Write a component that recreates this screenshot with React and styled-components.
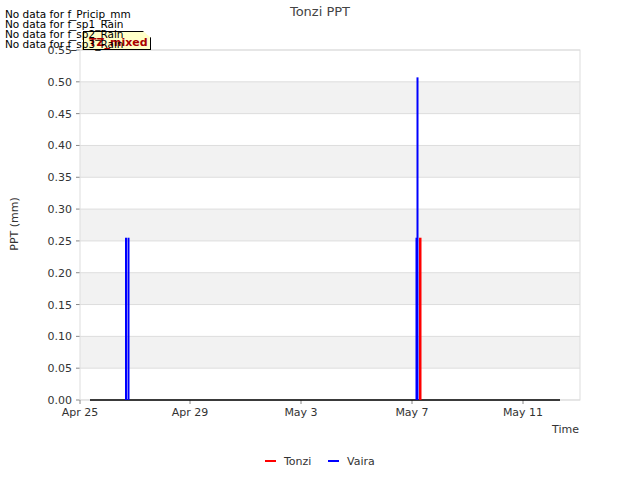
import React from 'react';
import styled, { createGlobalStyle } from 'styled-components';

const Global = createGlobalStyle`
  body { margin: 0; background: #fff; font-family: "DejaVu Sans", sans-serif; }
`;

const Page = styled.div`
  position: relative;
  width: 640px;
  height: 480px;
  overflow: hidden;
`;

const Notes = styled.div`
  position: absolute;
  left: 5px;
  top: 9px;
  font-size: 10.5px;
  line-height: 10px;
  color: #000;
`;

const Badge = styled.div`
  position: absolute;
  left: 83px;
  top: 31px;
  width: 68px;
  height: 19px;
  background: #ffffc8;
  border: 1px solid #000;
  clip-path: polygon(0 0, 88% 0, 100% 35%, 100% 100%, 0 100%);
  color: #aa0000;
  font-weight: bold;
  font-size: 11px;
  line-height: 21px;
  padding-left: 5px;
  box-sizing: border-box;
  white-space: nowrap;
`;

const Y0 = 400;
const K = 350 / 0.55;
const y = (v) => Y0 - v * K;
const ticks = Array.from({ length: 12 }, (_, i) => +(i * 0.05).toFixed(2));
const xs = [
  [80, 'Apr 25'],
  [190, 'Apr 29'],
  [301, 'May 3'],
  [412, 'May 7'],
  [523, 'May 11'],
];

function Chart() {
  return (
    <svg width="640" height="480" fontFamily="DejaVu Sans, sans-serif">
      <text x="320" y="16" textAnchor="middle" fontSize="13" fill="#444">Tonzi PPT</text>
      {ticks.slice(0, 11).map((v, i) =>
        i % 2 === 1 ? (
          <rect key={v} x="80" y={y(v + 0.05)} width="500" height={K * 0.05} fill="#f2f2f2" />
        ) : null
      )}
      {ticks.map((v) => (
        <g key={v}>
          <line x1="80" x2="580" y1={y(v)} y2={y(v)} stroke="#dddddd" />
          <line x1="76" x2="80" y1={y(v)} y2={y(v)} stroke="#888" />
          <text x="72" y={y(v) + 4} textAnchor="end" fontSize="11" fill="#333">{v.toFixed(2)}</text>
        </g>
      ))}
      <rect x="80" y="50" width="500" height="350" fill="none" stroke="#ddd" />
      {xs.map(([x, l]) => (
        <g key={l}>
          <line x1={x} x2={x} y1="400" y2="404" stroke="#888" />
          <text x={x} y="416" textAnchor="middle" fontSize="11" fill="#333">{l}</text>
        </g>
      ))}
      <text x="579" y="433" textAnchor="end" fontSize="11" fill="#333">Time</text>
      <text transform="translate(18 224) rotate(-90)" textAnchor="middle" fontSize="11" fill="#333">PPT (mm)</text>
      <line x1="90" x2="560" y1="400" y2="400" stroke="#000" strokeWidth="1.5" />
      <rect x="125" y={y(0.255)} width="2" height={K * 0.255} fill="#0000ff" />
      <rect x="127.5" y={y(0.255)} width="2" height={K * 0.255} fill="#0000ff" />
      <rect x="419" y={y(0.255)} width="2.5" height={K * 0.255} fill="#ff0000" />
      <rect x="415.5" y={y(0.255)} width="2" height={K * 0.255} fill="#0000ff" />
      <rect x="416.5" y={y(0.507)} width="2" height={K * 0.507} fill="#0000ff" />
      <rect x="265" y="460" width="11" height="2" fill="#ff0000" />
      <text x="284" y="465" fontSize="11" fill="#333">Tonzi</text>
      <rect x="328" y="460" width="11" height="2" fill="#0000ff" />
      <text x="347" y="465" fontSize="11" fill="#333">Vaira</text>
    </svg>
  );
}

export default function App() {
  return (
    <Page>
      <Global />
      <Chart />
      <Badge>TZ_mixed</Badge>
      <Notes>
        <div>No data for f_Pricip_mm</div>
        <div>No data for f_sp1_Rain</div>
        <div>No data for f_sp2_Rain</div>
        <div>No data for f_sp3_Rain</div>
      </Notes>
    </Page>
  );
}
